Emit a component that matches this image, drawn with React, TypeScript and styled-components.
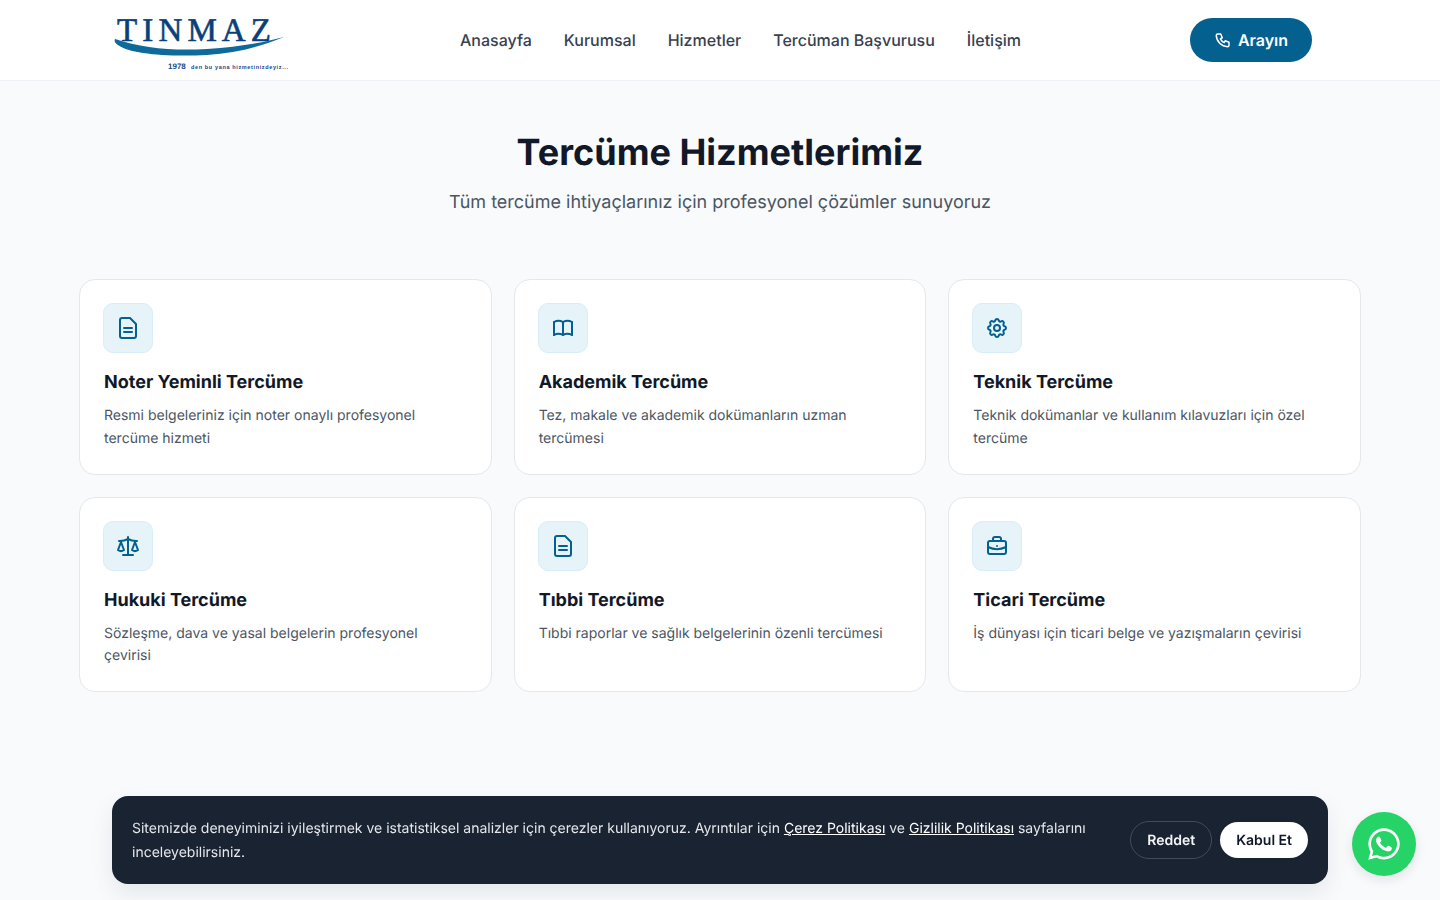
import React from 'react';
import styled, { createGlobalStyle } from 'styled-components';
import { Scale } from 'lucide-react';
import { TbBook, TbBriefcase, TbPhone, TbSettings } from 'react-icons/tb';
import { FaWhatsapp } from 'react-icons/fa';

const GlobalStyle = createGlobalStyle`
  * { box-sizing: border-box; }
  body {
    margin: 0;
    background: #f8fafc;
    font-family: Inter, "Noto Sans", sans-serif;
    color: #111827;
    text-rendering: geometricPrecision;
  }
`;

const Header = styled.header`
  height: 81px;
  background: #ffffff;
  border-bottom: 1px solid #eef1f5;
  padding: 0 128px 0 112px;
  display: flex;
  align-items: center;
  justify-content: space-between;
`;

const LogoSvg = styled.svg`
  display: block;
  width: 180px;
  height: 80px;
`;

const Nav = styled.nav`
  display: flex;
  gap: 32px;
  margin-left: -1px;
`;

const NavLink = styled.a`
  font-size: 16px;
  font-weight: 500;
  line-height: 24px;
  color: #374151;
`;

const CallButton = styled.a`
  width: 122px;
  height: 44px;
  border-radius: 22px;
  background: #04608f;
  color: #ffffff;
  font-size: 16px;
  font-weight: 600;
  display: flex;
  align-items: center;
  justify-content: center;
  gap: 6px;
`;

const Section = styled.section`
  width: 1282px;
  margin: 0 auto;
  padding-top: 48px;
`;

const Title = styled.h1`
  margin: 0;
  text-align: center;
  font-size: 36px;
  line-height: 46px;
  font-weight: 700;
  color: #111827;
`;

const Subtitle = styled.p`
  margin: 14px 0 0;
  text-align: center;
  font-size: 18px;
  line-height: 28px;
  color: #4b5563;
`;

const Grid = styled.div`
  margin-top: 62px;
  display: grid;
  grid-template-columns: repeat(3, 1fr);
  gap: 22px;
`;

const Card = styled.article`
  height: 195.5px;
  background: #ffffff;
  border: 1px solid #e5e7eb;
  border-radius: 16px;
  padding: 23px 24px;
`;

const IconBox = styled.div`
  width: 50px;
  height: 50px;
  margin-left: -1px;
  border-radius: 10px;
  background: #e6f4fa;
  border: 1px solid #d8edf6;
  color: #04608f;
  display: flex;
  align-items: center;
  justify-content: center;
`;

const CardTitle = styled.h3`
  margin: 18px 0 0;
  font-size: 18px;
  line-height: 24px;
  font-weight: 700;
  color: #111827;
`;

const CardText = styled.p`
  margin: 10px 0 0;
  font-size: 14px;
  line-height: 22.6px;
  color: #4b5563;
`;

const CookieBar = styled.div`
  position: fixed;
  left: 112px;
  bottom: 16px;
  width: 1216px;
  height: 88px;
  padding: 0 20px;
  border-radius: 16px;
  background: #1a2332;
  box-shadow: 0 10px 25px rgba(15, 23, 42, 0.08);
  display: flex;
  align-items: center;
  justify-content: space-between;
  gap: 24px;
`;

const CookieText = styled.p`
  margin: 0;
  padding-top: 2px;
  width: 970px;
  font-size: 14px;
  line-height: 24px;
  color: #e5e7eb;
`;

const CookieLink = styled.a`
  color: #ffffff;
  text-decoration: underline;
`;

const CookieActions = styled.div`
  display: flex;
  gap: 8px;
`;

const CookieButton = styled.button<{ $primary?: boolean }>`
  height: ${(p) => (p.$primary ? '36px' : '38px')};
  align-self: center;
  padding: 0 16px;
  border-radius: 19px;
  border: ${(p) => (p.$primary ? 'none' : '1px solid #424b5a')};
  background: ${(p) => (p.$primary ? '#ffffff' : 'transparent')};
  color: ${(p) => (p.$primary ? '#111827' : '#f3f4f6')};
  font-family: inherit;
  font-size: 14px;
  font-weight: 600;
  text-rendering: geometricPrecision;
`;

const WhatsappButton = styled.a`
  position: fixed;
  right: 24px;
  bottom: 24px;
  width: 64px;
  height: 64px;
  border-radius: 50%;
  background: #25d366;
  color: #ffffff;
  box-shadow: 0 4px 12px rgba(15, 23, 42, 0.1);
  display: flex;
  align-items: center;
  justify-content: center;
`;

const DocIcon = () => (
  <svg width="24" height="24" viewBox="0 0 24 24" fill="none" stroke="currentColor" strokeWidth="2" strokeLinecap="round" strokeLinejoin="round">
    <path d="M6 22a2 2 0 0 1-2-2V4a2 2 0 0 1 2-2h8l6 6v12a2 2 0 0 1-2 2z" />
    <path d="M8 12h8" />
    <path d="M8 16h8" />
  </svg>
);

const Logo = () => (
  <LogoSvg viewBox="0 0 180 80">
    <text x="5" y="41" fontFamily="Liberation Serif" fontSize="33" fill="#0b3f7a" stroke="#0b3f7a" strokeWidth="0.6" textLength="154" lengthAdjust="spacing">TINMAZ</text>
    <path d="M3 39C30 48 60 51 95 49C125 47 150 43 172 37C150 46 125 53 95 55C55 57 18 54 6 45C3 43 2 41 3 39Z" fill="#0f6a9c" />
    <text x="56" y="69" fontFamily="Liberation Sans" fontSize="8" fontWeight="700" fill="#1a4a86">1978</text>
    <text x="79" y="69" fontFamily="Liberation Sans" fontSize="5.5" fontWeight="700" fill="#1a4a86" textLength="97">den bu yana hizmetinizdeyiz...</text>
  </LogoSvg>
);

const links = ['Anasayfa', 'Kurumsal', 'Hizmetler', 'Tercüman Başvurusu', 'İletişim'];

const services = [
  { title: 'Noter Yeminli Tercüme', text: 'Resmi belgeleriniz için noter onaylı profesyonel tercüme hizmeti', icon: <DocIcon /> },
  { title: 'Akademik Tercüme', text: 'Tez, makale ve akademik dokümanların uzman tercümesi', icon: <TbBook size={24} /> },
  { title: 'Teknik Tercüme', text: 'Teknik dokümanlar ve kullanım kılavuzları için özel tercüme', icon: <TbSettings size={24} /> },
  { title: 'Hukuki Tercüme', text: 'Sözleşme, dava ve yasal belgelerin profesyonel çevirisi', icon: <Scale size={24} /> },
  { title: 'Tıbbi Tercüme', text: 'Tıbbi raporlar ve sağlık belgelerinin özenli tercümesi', icon: <DocIcon /> },
  { title: 'Ticari Tercüme', text: 'İş dünyası için ticari belge ve yazışmaların çevirisi', icon: <TbBriefcase size={24} /> },
];

export default function App() {
  return (
    <>
      <GlobalStyle />
      <Header>
        <Logo />
        <Nav>
          {links.map((link) => (
            <NavLink key={link}>{link}</NavLink>
          ))}
        </Nav>
        <CallButton>
          <TbPhone size={18} />
          Arayın
        </CallButton>
      </Header>
      <Section>
        <Title>Tercüme Hizmetlerimiz</Title>
        <Subtitle>Tüm tercüme ihtiyaçlarınız için profesyonel çözümler sunuyoruz</Subtitle>
        <Grid>
          {services.map((service) => (
            <Card key={service.title}>
              <IconBox>{service.icon}</IconBox>
              <CardTitle>{service.title}</CardTitle>
              <CardText>{service.text}</CardText>
            </Card>
          ))}
        </Grid>
      </Section>
      <CookieBar>
        <CookieText>
          Sitemizde deneyiminizi iyileştirmek ve istatistiksel analizler için çerezler kullanıyoruz. Ayrıntılar için{' '}
          <CookieLink>Çerez Politikası</CookieLink> ve <CookieLink>Gizlilik Politikası</CookieLink> sayfalarını inceleyebilirsiniz.
        </CookieText>
        <CookieActions>
          <CookieButton>Reddet</CookieButton>
          <CookieButton $primary>Kabul Et</CookieButton>
        </CookieActions>
      </CookieBar>
      <WhatsappButton>
        <FaWhatsapp size={36} />
      </WhatsappButton>
    </>
  );
}
